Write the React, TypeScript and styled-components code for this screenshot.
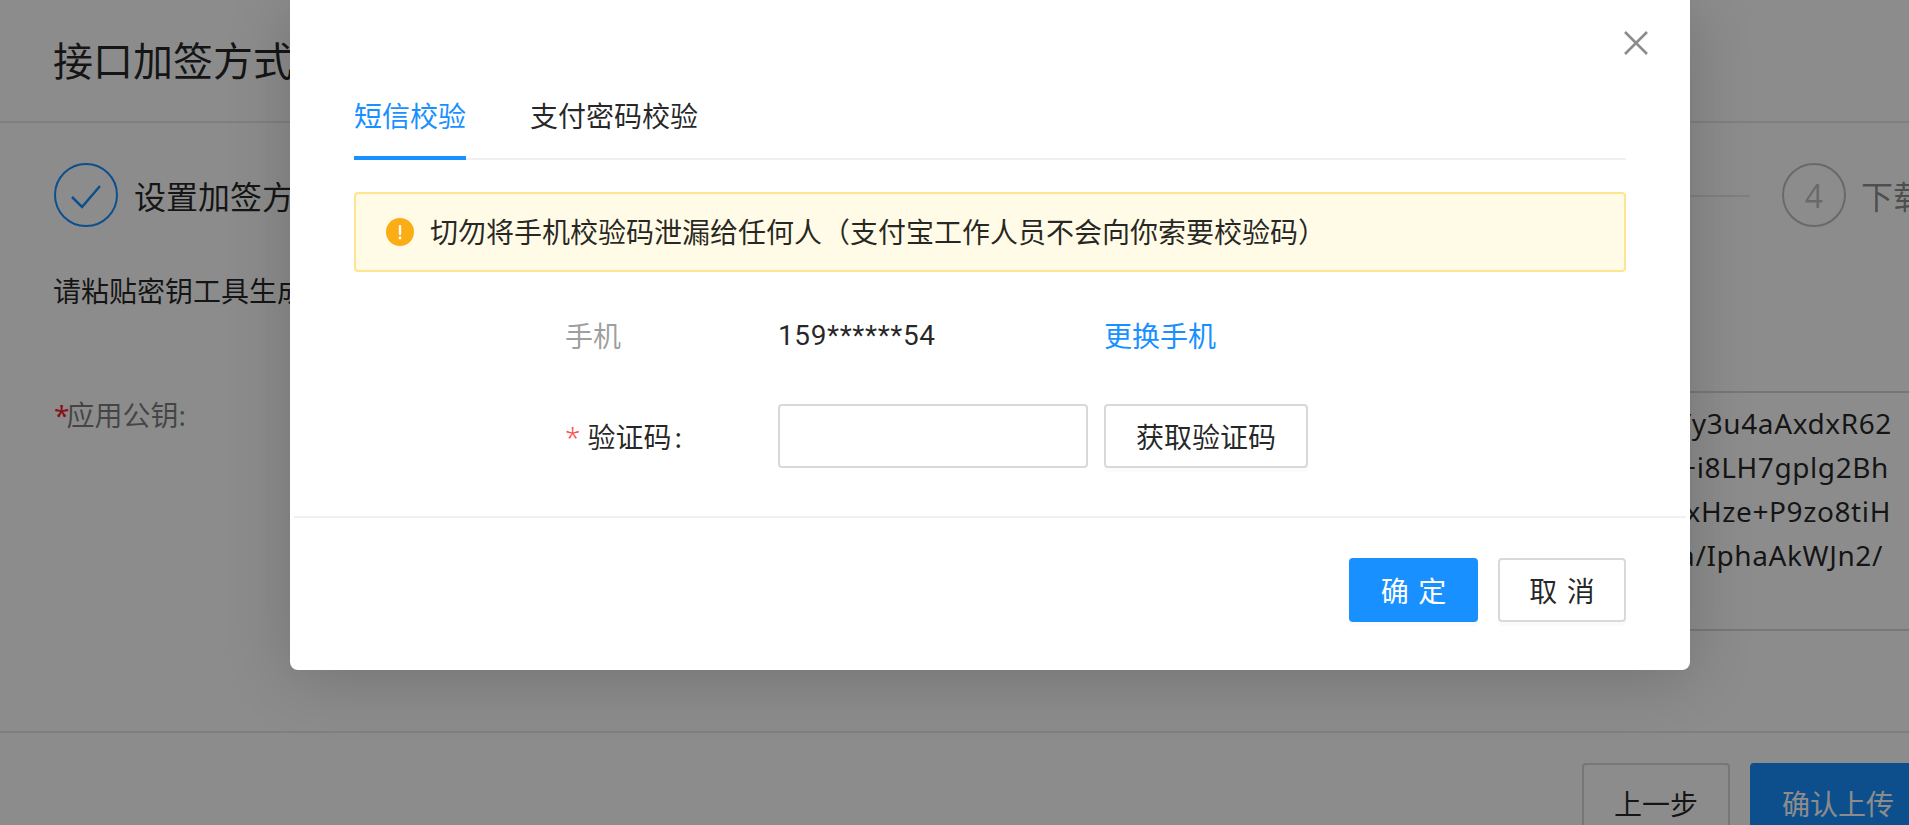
import React from 'react';
import { createGlobalStyle, styled } from 'styled-components';

const GlobalStyle = createGlobalStyle`
	html,
	body {
		margin: 0;
		height: 825px;
		overflow: hidden;
		background: #fff;
	}

	body {
		font-family: 'Noto Sans', 'Noto Sans CJK SC', sans-serif;
		color: rgba(0, 0, 0, 0.85);
	}

	* {
		box-sizing: border-box;
	}
`;

const keyLines = [
	{ text: 'Yy3u4aAxdxR62', end: 35 },
	{ text: '+i8LH7gplg2Bh', end: 38 },
	{ text: 'xHze+P9zo8tiH', end: 36 },
	{ text: 'a/IphaAkWJn2/', end: 44 },
];

const App: React.FC = () => {
	return (
		<Page>
			<GlobalStyle />
			<Header>接口加签方式</Header>

			<Steps>
				<StepCircle $done>
					<svg width='64' height='64' viewBox='0 0 64 64' fill='none'>
						<path d='M18 34 L28 44 L46 23' stroke='#1890ff' strokeWidth='2.5' />
					</svg>
				</StepCircle>
				<StepLabel>设置加签方式</StepLabel>
				<StepLine />
				<StepCircle>4</StepCircle>
				<StepLabel $muted>下载证书</StepLabel>
			</Steps>

			<Hint>请粘贴密钥工具生成的内容</Hint>

			<KeyRow>
				<KeyLabel>
					<em>*</em>应用公钥:
				</KeyLabel>
				<KeyBox>
					{keyLines.map((line) => (
						<KeyLine key={line.text} $end={line.end}>
							{line.text}
						</KeyLine>
					))}
				</KeyBox>
			</KeyRow>

			<PageFooter>
				<PageButton>上一步</PageButton>
				<PageButton $primary>确认上传</PageButton>
			</PageFooter>

			<Overlay />

			<Modal>
				<CloseButton aria-label='close'>
					<svg width='24' height='24' viewBox='0 0 24 24' fill='none'>
						<path d='M1 1 L23 23 M23 1 L1 23' stroke='#8c8c8c' strokeWidth='2.6' />
					</svg>
				</CloseButton>

				<ModalBody>
					<TabBar>
						<Tab $active>短信校验</Tab>
						<Tab>支付密码校验</Tab>
					</TabBar>

					<Alert>
						<svg width='28' height='28' viewBox='0 0 28 28'>
							<circle cx='14' cy='14' r='14' fill='#faad14' />
							<rect x='12.8' y='7' width='2.4' height='10' rx='1' fill='#fff' />
							<circle cx='14' cy='20' r='1.4' fill='#fff' />
						</svg>
						<span>切勿将手机校验码泄漏给任何人（支付宝工作人员不会向你索要校验码）</span>
					</Alert>

					<PhoneRow>
						<PhoneLabel>手机</PhoneLabel>
						<PhoneValue>159******54</PhoneValue>
						<ChangeLink>更换手机</ChangeLink>
					</PhoneRow>

					<CodeRow>
						<CodeLabel>
							<em>*</em>验证码<i>:</i>
						</CodeLabel>
						<CodeInput />
						<CodeButton>获取验证码</CodeButton>
					</CodeRow>
				</ModalBody>

				<ModalFooter>
					<ModalButton $primary>确 定</ModalButton>
					<ModalButton>取 消</ModalButton>
				</ModalFooter>
			</Modal>
		</Page>
	);
};

export default App;

const Page = styled.div`
	position: relative;
	width: 1909px;
	height: 825px;
	overflow: hidden;
`;

const Header = styled.header`
	height: 123px;
	padding: 0 53px;
	font-size: 40px;
	line-height: 122px;
	border-bottom: 2px solid #e8e8e8;
`;

const Steps = styled.div`
	display: flex;
	align-items: center;
	height: 64px;
	margin: 40px -80px 0 54px;
`;

const StepCircle = styled.div<{ $done?: boolean }>`
	flex: none;
	width: 64px;
	height: 64px;
	border-radius: 50%;
	border: 2px solid ${(p) => (p.$done ? '#1890ff' : 'rgba(0, 0, 0, 0.25)')};
	display: flex;
	align-items: center;
	justify-content: center;
	font-size: 32px;
	color: rgba(0, 0, 0, 0.25);

	& > svg {
		flex: none;
		margin: -2px;
	}
`;

const StepLabel = styled.div<{ $muted?: boolean }>`
	flex: none;
	margin-left: ${(p) => (p.$muted ? 15 : 16)}px;
	padding-top: 4px;
	font-size: 32px;
	line-height: 44px;
	color: ${(p) => (p.$muted ? 'rgba(0, 0, 0, 0.45)' : 'rgba(0, 0, 0, 0.85)')};
`;

const StepLine = styled.div`
	flex: 1;
	height: 2px;
	margin: 2px 32px 0;
	background: #e8e8e8;
`;

const Hint = styled.p`
	margin: 42px 53px 0;
	font-size: 28px;
	line-height: 44px;
`;

const KeyRow = styled.div`
	display: flex;
	margin: 78px -20px 0 54px;
`;

const KeyLabel = styled.label`
	flex: none;
	width: 260px;
	margin-top: 2px;
	font-size: 28px;
	line-height: 44px;
	color: rgba(0, 0, 0, 0.5);

	& > em {
		margin-right: -3px;
		font-style: normal;
		color: #f5222d;
	}
`;

const KeyBox = styled.div`
	flex: 1;
	height: 240px;
	padding-top: 8px;
	border: 2px solid #d9d9d9;
	border-radius: 4px;
`;

const KeyLine = styled.div<{ $end: number }>`
	padding-right: ${(p) => p.$end}px;
	text-align: right;
	font-size: 28px;
	line-height: 44px;
	letter-spacing: 0.6px;
`;

const PageFooter = styled.footer`
	display: flex;
	justify-content: flex-end;
	gap: 20px;
	margin: 100px -17px 0 0;
	padding-top: 30px;
	border-top: 2px solid #e8e8e8;
`;

const PageButton = styled.button<{ $primary?: boolean }>`
	flex: none;
	height: 80px;
	padding: 0 30px;
	border: 2px solid ${(p) => (p.$primary ? '#1890ff' : '#d9d9d9')};
	border-radius: 4px;
	background: ${(p) => (p.$primary ? '#1890ff' : '#fff')};
	color: ${(p) => (p.$primary ? '#fff' : 'rgba(0, 0, 0, 0.85)')};
	font: inherit;
	font-size: 28px;
`;

const Overlay = styled.div`
	position: absolute;
	inset: 0;
	background: rgba(0, 0, 0, 0.45);
`;

const Modal = styled.section`
	position: absolute;
	top: 0;
	left: 290px;
	width: 1400px;
	height: 670px;
	background: #fff;
	border-radius: 0 0 8px 8px;
	box-shadow: 0 8px 64px rgba(0, 0, 0, 0.18);
`;

const CloseButton = styled.button`
	position: absolute;
	top: 31px;
	right: 42px;
	width: 24px;
	height: 24px;
	padding: 0;
	border: 0;
	background: none;
	line-height: 0;
`;

const ModalBody = styled.div`
	padding: 68px 64px 48px;
`;

const TabBar = styled.div`
	display: flex;
	gap: 64px;
	border-bottom: 2px solid #f0f0f0;
`;

const Tab = styled.div<{ $active?: boolean }>`
	padding: 26px 0 18px;
	margin-bottom: -2px;
	font-size: 28px;
	line-height: 44px;
	color: ${(p) => (p.$active ? '#1890ff' : 'rgba(0, 0, 0, 0.85)')};
	border-bottom: 4px solid ${(p) => (p.$active ? '#1890ff' : 'transparent')};
`;

const Alert = styled.div`
	display: flex;
	align-items: center;
	gap: 16px;
	height: 80px;
	margin-top: 32px;
	padding: 0 30px;
	background: #fffbe6;
	border: 2px solid #ffe58f;
	border-radius: 4px;
	font-size: 28px;
	line-height: 44px;
`;

const PhoneRow = styled.div`
	display: flex;
	margin-top: 42px;
	padding-left: 211px;
	font-size: 28px;
	line-height: 44px;
`;

const PhoneLabel = styled.div`
	width: 213px;
	color: rgba(0, 0, 0, 0.4);
`;

const PhoneValue = styled.div`
	width: 326px;
	font-family: Roboto, 'Noto Sans', sans-serif;
	letter-spacing: 0.6px;
`;

const ChangeLink = styled.a`
	color: #1890ff;
`;

const CodeRow = styled.div`
	display: flex;
	align-items: center;
	margin-top: 46px;
	padding-left: 211px;
	font-size: 28px;
`;

const CodeLabel = styled.label`
	width: 213px;

	& > em {
		margin-right: 7px;
		font-style: normal;
		font-weight: 300;
		color: #ff4d4f;
	}

	& > i {
		margin-left: 3px;
		font-style: normal;
	}
`;

const CodeInput = styled.input`
	width: 310px;
	height: 64px;
	margin-right: 16px;
	border: 2px solid #d9d9d9;
	border-radius: 4px;
`;

const CodeButton = styled.button`
	width: 204px;
	height: 64px;
	padding: 0;
	border: 2px solid #d9d9d9;
	border-radius: 4px;
	background: #fff;
	box-shadow: 0 4px 0 rgba(0, 0, 0, 0.015);
	color: rgba(0, 0, 0, 0.85);
	font: inherit;
	font-size: 28px;
`;

const ModalFooter = styled.div`
	display: flex;
	justify-content: flex-end;
	gap: 20px;
	margin: 0 4px;
	padding: 40px 60px 0;
	border-top: 2px solid #f0f0f0;
`;

const ModalButton = styled.button<{ $primary?: boolean }>`
	width: ${(p) => (p.$primary ? 129 : 128)}px;
	height: 64px;
	padding: 0;
	border: 2px solid ${(p) => (p.$primary ? '#1890ff' : '#d9d9d9')};
	border-radius: 4px;
	background: ${(p) => (p.$primary ? '#1890ff' : '#fff')};
	box-shadow: 0 4px 0 rgba(0, 0, 0, 0.015);
	color: ${(p) => (p.$primary ? '#fff' : 'rgba(0, 0, 0, 0.85)')};
	font: inherit;
	font-size: 28px;
	word-spacing: 2px;
`;
